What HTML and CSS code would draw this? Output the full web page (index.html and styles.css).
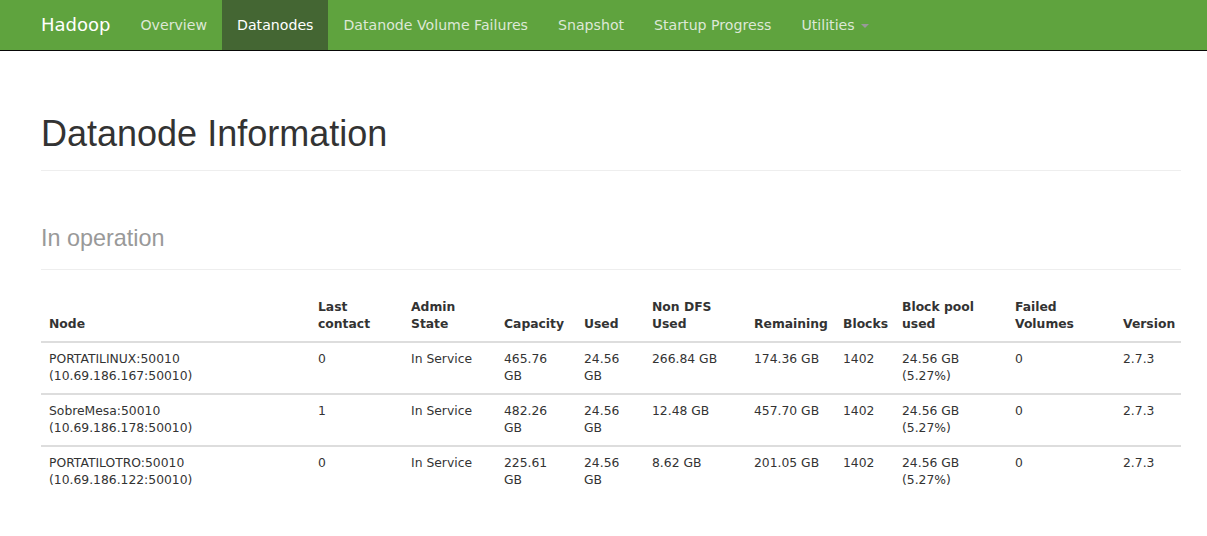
FILE: index.html
```html
<!DOCTYPE html>
<html>
<head>
<meta charset="utf-8">
<title>Namenode information</title>
<link rel="stylesheet" href="styles.css">
</head>
<body>
<header class="navbar">
  <div class="navbar-inner">
    <a class="brand" href="#">Hadoop</a>
    <ul class="nav">
      <li><a href="#">Overview</a></li>
      <li class="active"><a href="#">Datanodes</a></li>
      <li><a href="#">Datanode Volume Failures</a></li>
      <li><a href="#">Snapshot</a></li>
      <li><a href="#">Startup Progress</a></li>
      <li><a href="#">Utilities <span class="caret"></span></a></li>
    </ul>
  </div>
</header>
<main class="container">
  <div class="page-header first"><h1>Datanode Information</h1></div>
  <div class="page-header"><h1><small>In operation</small></h1></div>
  <table class="table">
    <colgroup>
      <col class="c-node"><col class="c-contact"><col class="c-admin"><col class="c-cap"><col class="c-used"><col class="c-nondfs"><col class="c-rem"><col class="c-blocks"><col class="c-pool"><col class="c-failed"><col class="c-version">
    </colgroup>
    <thead>
      <tr>
        <th>Node</th><th>Last contact</th><th>Admin State</th><th>Capacity</th><th>Used</th><th>Non DFS Used</th><th>Remaining</th><th>Blocks</th><th>Block pool used</th><th>Failed Volumes</th><th>Version</th>
      </tr>
    </thead>
    <tbody>
      <tr>
        <td>PORTATILINUX:50010 (10.69.186.167:50010)</td><td>0</td><td>In Service</td><td>465.76 GB</td><td>24.56 GB</td><td>266.84 GB</td><td>174.36 GB</td><td>1402</td><td>24.56 GB (5.27%)</td><td>0</td><td>2.7.3</td>
      </tr>
      <tr>
        <td>SobreMesa:50010 (10.69.186.178:50010)</td><td>1</td><td>In Service</td><td>482.26 GB</td><td>24.56 GB</td><td>12.48 GB</td><td>457.70 GB</td><td>1402</td><td>24.56 GB (5.27%)</td><td>0</td><td>2.7.3</td>
      </tr>
      <tr>
        <td>PORTATILOTRO:50010 (10.69.186.122:50010)</td><td>0</td><td>In Service</td><td>225.61 GB</td><td>24.56 GB</td><td>8.62 GB</td><td>201.05 GB</td><td>1402</td><td>24.56 GB (5.27%)</td><td>0</td><td>2.7.3</td>
      </tr>
    </tbody>
  </table>
</main>
</body>
</html>
```
FILE: styles.css
```css
html, body {
  margin: 0;
  padding: 0;
  background: #fff;
  color: #333;
  font-family: "DejaVu Sans", sans-serif;
  font-size: 14px;
  line-height: 1.42857;
}

.navbar {
  background-color: #5fa33e;
  border-bottom: 1px solid #080808;
  height: 50px;
}

.navbar-inner {
  display: flex;
  align-items: stretch;
  height: 50px;
  padding-left: 26px;
}

.brand {
  display: block;
  padding: 15px 15px;
  font-size: 18px;
  line-height: 20px;
  color: #fff;
  text-decoration: none;
}

.nav {
  display: flex;
  list-style: none;
  margin: 0;
  padding: 0;
}

.nav li a {
  display: block;
  padding: 15px 15px;
  line-height: 20px;
  font-size: 14.15px;
  color: #dde8d6;
  text-decoration: none;
}

.nav li.active a {
  background-color: #446633;
  color: #fff;
}

.caret {
  display: inline-block;
  width: 0;
  height: 0;
  margin-left: 2px;
  vertical-align: middle;
  border-top: 4px solid #999;
  border-left: 4px solid transparent;
  border-right: 4px solid transparent;
}

.container {
  padding: 0 26px 0 41px;
}

.page-header {
  margin: 43px 0 21px;
  padding-bottom: 16px;
  border-bottom: 1px solid #eee;
}

.page-header.first {
  margin-top: 63px;
}

.page-header h1 {
  margin: 0;
  font-family: "Liberation Sans", Arial, sans-serif;
  font-size: 36px;
  font-weight: 500;
  line-height: 1.1;
  color: #333;
}

.page-header h1 small {
  font-size: 65%;
  font-weight: normal;
  color: #999;
}

.table {
  width: 1140px;
  border-collapse: collapse;
  border-spacing: 0;
  table-layout: fixed;
  font-size: 12.35px;
  line-height: 17px;
  margin-bottom: 20px;
}

.table th,
.table td {
  padding: 8px;
  text-align: left;
}

.table th {
  font-weight: bold;
  vertical-align: bottom;
  border-bottom: 2px solid #ddd;
}

.table td {
  vertical-align: top;
  border-top: 2px solid #ddd;
}

.c-node { width: 269px; }
.c-contact { width: 93px; }
.c-admin { width: 93px; }
.c-cap { width: 80px; }
.c-used { width: 68px; }
.c-nondfs { width: 102px; }
.c-rem { width: 89px; }
.c-blocks { width: 59px; }
.c-pool { width: 113px; }
.c-failed { width: 108px; }
.c-version { width: 66px; }
```
